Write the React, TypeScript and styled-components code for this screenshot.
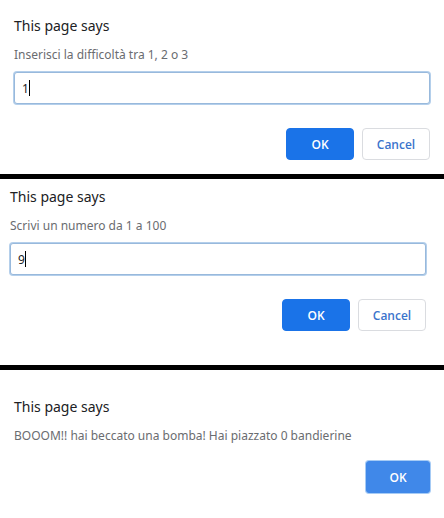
import React from 'react';
import styled, { createGlobalStyle } from 'styled-components';

const GlobalStyle = createGlobalStyle`
  * { box-sizing: border-box; }
  body {
    margin: 0;
    background: #fff;
    font-family: "Noto Sans", "Open Sans", sans-serif;
  }
`;

const Dialog = styled.form<{ $pad: string }>`
  display: flex;
  flex-direction: column;
  padding: ${(p) => p.$pad};
  & + & { border-top: 5px solid #000; }
`;

const Title = styled.h1`
  margin: 0;
  font-size: 14px;
  line-height: 20px;
  font-weight: 400;
  color: #202124;
`;

const Message = styled.label`
  margin: 9px 0 0;
  font-size: 12px;
  line-height: 20px;
  color: #6a6c70;
`;

const FieldBox = styled.div`
  position: relative;
  margin-top: 7px;
`;

const Field = styled.input`
  display: block;
  width: 100%;
  height: 32px;
  padding: 0 7px;
  border: 1px solid #98b9dc;
  border-radius: 3px;
  box-shadow: 0 0 0 1px #b4cfeb;
  font: 12px "Noto Sans", "Open Sans", sans-serif;
  color: #202124;
  caret-color: transparent;
  outline: none;
`;

const Caret = styled.span`
  position: absolute;
  top: 8px;
  left: 15px;
  width: 1px;
  height: 16px;
  background: #000;
  pointer-events: none;
`;

const Actions = styled.div<{ $gap: number }>`
  display: flex;
  justify-content: flex-end;
  gap: 8px;
  margin-top: ${(p) => p.$gap}px;
`;

const fills = { primary: '#1a73e8', plain: '#fff', hover: '#4088e9' };

const Button = styled.button<{ $kind: keyof typeof fills }>`
  width: ${(p) => (p.$kind === 'hover' ? 64 : 68)}px;
  height: 32px;
  padding: 0;
  border: 1px solid ${(p) => (p.$kind === 'plain' ? '#dadce0' : fills[p.$kind])};
  border-radius: ${(p) => (p.$kind === 'hover' ? 3 : 4)}px;
  box-shadow: ${(p) => (p.$kind === 'hover' ? '0 0 0 1px #a6cbf5' : 'none')};
  background: ${(p) => fills[p.$kind]};
  color: ${(p) => (p.$kind === 'plain' ? '#3b74cc' : '#fff')};
  font: 600 12px "Open Sans", sans-serif;
`;

type PromptProps = { id: string; message: string; value: string; pad: string };

const Prompt = ({ id, message, value, pad }: PromptProps) => (
  <Dialog $pad={pad} onSubmit={(e) => e.preventDefault()}>
    <Title>This page says</Title>
    <Message htmlFor={id}>{message}</Message>
    <FieldBox>
      <Field id={id} defaultValue={value} />
      <Caret />
    </FieldBox>
    <Actions $gap={24}>
      <Button $kind="primary">OK</Button>
      <Button $kind="plain" type="button">Cancel</Button>
    </Actions>
  </Dialog>
);

export default function App() {
  return (
    <>
      <GlobalStyle />
      <Prompt id="level" message="Inserisci la difficoltà tra 1, 2 o 3" value="1" pad="16px 14px 14px" />
      <Prompt id="number" message="Scrivi un numero da 1 a 100" value="9" pad="8px 18px 34px 10px" />
      <Dialog $pad="27px 14px 24px" onSubmit={(e) => e.preventDefault()}>
        <Title>This page says</Title>
        <Message as="p">BOOOM!! hai beccato una bomba! Hai piazzato 0 bandierine</Message>
        <Actions $gap={15}>
          <Button $kind="hover">OK</Button>
        </Actions>
      </Dialog>
    </>
  );
}
